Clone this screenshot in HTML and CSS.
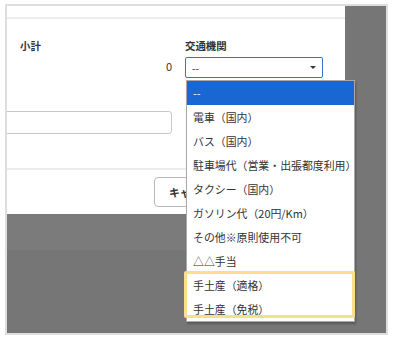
FILE: index.html
```html
<!DOCTYPE html>
<html lang="ja">

<head>
  <meta charset="UTF-8">
  <meta name="viewport" content="width=device-width, initial-scale=1.0">
  <title>交通費入力</title>
  <link rel="stylesheet" href="styles.css">
</head>

<body>
  <div class="frame">
    <div class="modal">
      <div class="modal-header"></div>

      <div class="modal-body">
        <div class="field-row">
          <div class="col">
            <div class="label">小計</div>
            <div class="amount">0</div>
          </div>
          <div class="col">
            <div class="label">交通機関</div>
            <div class="select">
              <span>--</span>
              <span class="caret"></span>
            </div>
          </div>
        </div>
        <input type="text" class="memo">
      </div>

      <div class="modal-footer">
        <button class="btn">キャンセル</button>
      </div>
    </div>

    <ul class="dropdown">
      <li class="selected">--</li>
      <li>電車（国内）</li>
      <li>バス（国内）</li>
      <li>駐車場代（営業・出張都度利用）</li>
      <li>タクシー（国内）</li>
      <li>ガソリン代（20円/Km）</li>
      <li>その他※原則使用不可</li>
      <li>△△手当</li>
      <li>手土産（適格）</li>
      <li>手土産（免税）</li>
    </ul>

    <div class="highlight"></div>
  </div>
</body>

</html>
```

FILE: styles.css
```css
body {
  font-family: 'Noto Sans CJK JP', 'Noto Sans', sans-serif;
  background-color: #fff;
  color: #333;
  margin: 0;
  padding: 0;
}

.frame {
  position: relative;
  margin: 4px 0 0 5px;
  width: 379px;
  height: 327px;
  border: 2px solid #dedede;
  background-color: #767676;
  overflow: hidden;
}

.modal {
  width: 338px;
  height: 208px;
  background-color: #fff;
  display: flex;
  flex-direction: column;
  overflow: hidden;
  box-shadow: 0 36px 0 0 #7b7b7b;
}

.modal-header {
  height: 11px;
  flex-shrink: 0;
  border-bottom: 2px solid #ececec;
}

.modal-body {
  flex: 1;
  padding: 20px 0 0 13px;
}

.field-row {
  display: flex;
  gap: 13px;
}

.col {
  display: flex;
  flex-direction: column;
}

.col:first-child {
  width: 152px;
}

.col:last-child {
  width: 138px;
}

.label {
  font-size: 10.4px;
  font-weight: bold;
  line-height: 14px;
}

.amount {
  font-size: 11px;
  line-height: 14px;
  text-align: right;
  margin-top: 6px;
}

.select {
  margin-top: 4px;
  height: 21px;
  box-sizing: border-box;
  border: 1px solid #3a71d1;
  border-radius: 2px;
  padding: 0 6px;
  display: flex;
  align-items: center;
  justify-content: space-between;
  font-size: 10.4px;
}

.caret {
  width: 0;
  height: 0;
  border-left: 3px solid transparent;
  border-right: 3px solid transparent;
  border-top: 3px solid #333;
}

.memo {
  display: block;
  margin: 33px 0 0 -20px;
  width: 172px;
  height: 23px;
  box-sizing: border-box;
  border: 1px solid #c8c8c8;
  border-radius: 3px;
}

.modal-footer {
  flex-shrink: 0;
  height: 46px;
  box-sizing: border-box;
  border-top: 2px solid #ececec;
  padding: 7px 0 0 147px;
  display: flex;
}

.btn {
  height: 30px;
  padding: 0 14px;
  background-color: #fff;
  border: 1px solid #b8b8b8;
  border-radius: 4px;
  font-family: inherit;
  font-size: 10.8px;
  font-weight: bold;
  color: #333;
}

.dropdown {
  position: absolute;
  left: 179px;
  top: 74px;
  width: 169px;
  margin: 0;
  padding: 0;
  list-style: none;
  box-sizing: border-box;
  background-color: #fff;
  border: 1px solid #a9a9a9;
  box-shadow: 1px 2px 2px rgba(0, 0, 0, 0.25);
}

.dropdown li {
  height: 24px;
  line-height: 24px;
  padding-left: 6px;
  font-size: 10.9px;
  color: #333;
  white-space: nowrap;
}

.dropdown li.selected {
  background-color: #1967d2;
  color: #fff;
}

.highlight {
  position: absolute;
  left: 177px;
  top: 265px;
  width: 171px;
  height: 47px;
  box-sizing: border-box;
  border: 3px solid #f9df8b;
  border-radius: 2px;
}
```
